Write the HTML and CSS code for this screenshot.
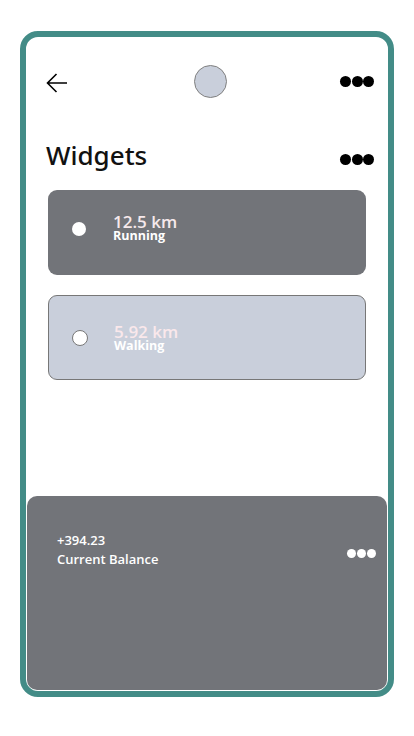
FILE: index.html
```html
<!DOCTYPE html>
<html>
<head>
<meta charset="utf-8">
<link rel="stylesheet" href="styles.css">
</head>
<body>
<div class="frame">
  <div class="topbar">
    <svg class="back" width="22" height="20" viewBox="0 0 22 20"><path d="M21 10H1.5M10.5 1L1.5 10l9 9" fill="none" stroke="#000" stroke-width="1.6"/></svg>
    <div class="avatar"></div>
    <div class="dots dark end"><span></span><span></span><span></span></div>
  </div>
  <div class="title-row">
    <h1 class="title">Widgets</h1>
    <div class="dots dark"><span></span><span></span><span></span></div>
  </div>
  <div class="card card-run">
    <div class="bullet bullet-solid"></div>
    <div class="card-text">
      <div class="value">12.5 km</div>
      <div class="label">Running</div>
    </div>
  </div>
  <div class="card card-walk">
    <div class="bullet bullet-ring"></div>
    <div class="card-text">
      <div class="value">5.92 km</div>
      <div class="label">Walking</div>
    </div>
  </div>
  <div class="balance">
    <div class="balance-text">
      <div class="amount">+394.23</div>
      <div class="caption">Current Balance</div>
    </div>
    <div class="dots light"><span></span><span></span><span></span></div>
  </div>
</div>
</body>
</html>
```
FILE: styles.css
```css
* { box-sizing: border-box; }
body {
  margin: 0;
  background: #fff;
  font-family: "Open Sans", "Noto Sans", sans-serif;
}
.frame {
  margin: 31px 0 0 20px;
  width: 374px;
  height: 666px;
  border: 6px solid #438c87;
  border-radius: 18px;
  background: #fff;
  display: flex;
  flex-direction: column;
  overflow: hidden;
}
.topbar {
  margin-top: 28px;
  height: 33px;
  padding: 0 14px 0 20px;
  display: grid;
  grid-template-columns: 1fr auto 1fr;
  align-items: center;
}
.back { display: block; margin-top: 2px; }
.avatar {
  width: 33px;
  height: 33px;
  border-radius: 50%;
  background: #c9cfdb;
  border: 1px solid #808080;
  margin-left: 1px;
}
.dots { display: flex; }
.dots.end { justify-self: end; }
.dots span {
  width: 11px;
  height: 11px;
  border-radius: 50%;
}
.dots span + span { margin-left: 0.5px; }
.dots.dark span { background: #000; }
.dots.light span { background: #fff; width: 9px; height: 9px; margin-left: 1px; }
.title-row {
  margin-top: 38px;
  height: 38px;
  padding: 0 14px 0 20px;
  display: flex;
  align-items: center;
  justify-content: space-between;
}
.title {
  margin: 0;
  font-family: "Noto Sans", "Open Sans", sans-serif;
  font-size: 26px;
  font-weight: 500;
  color: #111;
  line-height: 38px;
}
.title-row .dots { margin-top: 8px; }
.card {
  margin: 16px 0 0 22px;
  width: 318px;
  height: 85px;
  border-radius: 9px;
  display: flex;
  align-items: center;
  padding: 0 0 10px 24px;
}
.card-run { background: #727479; }
.card-walk {
  margin-top: 20px;
  background: #c9cfdb;
  border: 1px solid #777;
  padding-bottom: 0;
  padding-left: 23px;
}
.bullet {
  width: 14px;
  height: 14px;
  border-radius: 50%;
  background: #fff;
  flex: none;
}
.card-run .bullet { margin-top: 2px; }
.bullet-ring {
  width: 16px;
  height: 16px;
  border: 1px solid #777;
}
.card-text { margin-left: 27px; }
.card-walk .card-text { margin-left: 26px; }
.value {
  font-size: 17px;
  font-weight: 600;
  line-height: 16px;
  color: #f6e9ec;
}
.card-walk .value { color: #fae8eb; }
.label {
  font-size: 12.5px;
  font-weight: 700;
  line-height: 12px;
  color: #fff;
}
.balance {
  margin: auto 1px 1px 1px;
  height: 194px;
  background: #727479;
  border-radius: 10px;
  display: flex;
  align-items: flex-start;
  justify-content: space-between;
  padding: 35px 11px 0 30px;
}
.balance-text { color: #fff; }
.amount {
  font-size: 13px;
  font-weight: 600;
  line-height: 19px;
}
.caption {
  font-size: 13px;
  font-weight: 600;
  line-height: 19px;
}
.balance .dots { margin-top: 18px; }
```
